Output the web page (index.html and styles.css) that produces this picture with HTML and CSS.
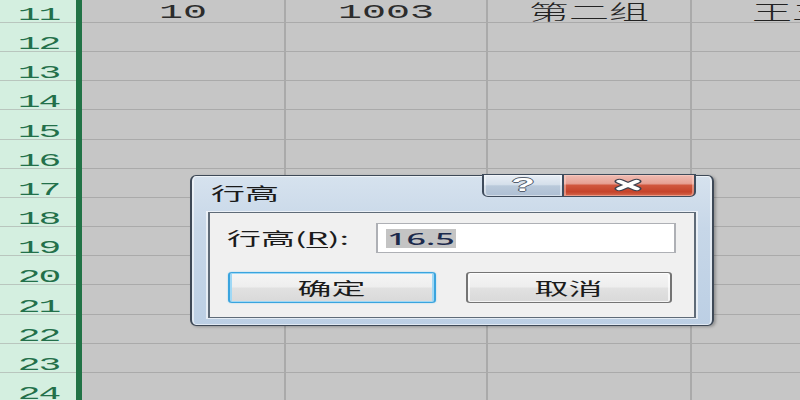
FILE: index.html
```html
<!DOCTYPE html>
<html lang="zh-CN">
<head>
<meta charset="utf-8">
<title>行高</title>
<link rel="stylesheet" href="styles.css">
</head>
<body>
<div class="stage">
  <div class="sheet">
    <div class="rowhdrs">
      <div class="rh"><span>11</span></div>
      <div class="rh"><span>12</span></div>
      <div class="rh"><span>13</span></div>
      <div class="rh"><span>14</span></div>
      <div class="rh"><span>15</span></div>
      <div class="rh"><span>16</span></div>
      <div class="rh"><span>17</span></div>
      <div class="rh"><span>18</span></div>
      <div class="rh"><span>19</span></div>
      <div class="rh"><span>20</span></div>
      <div class="rh"><span>21</span></div>
      <div class="rh"><span>22</span></div>
      <div class="rh"><span>23</span></div>
      <div class="rh"><span>24</span></div>
    </div>
    <div class="selbar"></div>
    <div class="sep"></div>
    <div class="cells">
      <div class="row"><div class="cell"><span>10</span></div><div class="cell"><span>1003</span></div><div class="cell"><span class="cjk">第二组</span></div><div class="cell"><span class="cjk">王五</span></div></div>
      <div class="row"><div class="cell"></div><div class="cell"></div><div class="cell"></div><div class="cell"></div></div>
      <div class="row"><div class="cell"></div><div class="cell"></div><div class="cell"></div><div class="cell"></div></div>
      <div class="row"><div class="cell"></div><div class="cell"></div><div class="cell"></div><div class="cell"></div></div>
      <div class="row"><div class="cell"></div><div class="cell"></div><div class="cell"></div><div class="cell"></div></div>
      <div class="row"><div class="cell"></div><div class="cell"></div><div class="cell"></div><div class="cell"></div></div>
      <div class="row"><div class="cell"></div><div class="cell"></div><div class="cell"></div><div class="cell"></div></div>
      <div class="row"><div class="cell"></div><div class="cell"></div><div class="cell"></div><div class="cell"></div></div>
      <div class="row"><div class="cell"></div><div class="cell"></div><div class="cell"></div><div class="cell"></div></div>
      <div class="row"><div class="cell"></div><div class="cell"></div><div class="cell"></div><div class="cell"></div></div>
      <div class="row"><div class="cell"></div><div class="cell"></div><div class="cell"></div><div class="cell"></div></div>
      <div class="row"><div class="cell"></div><div class="cell"></div><div class="cell"></div><div class="cell"></div></div>
      <div class="row"><div class="cell"></div><div class="cell"></div><div class="cell"></div><div class="cell"></div></div>
      <div class="row"><div class="cell"></div><div class="cell"></div><div class="cell"></div><div class="cell"></div></div>
    </div>
  </div>

  <div class="dialog">
    <div class="titlebar">
      <span class="title">行高</span>
      <div class="capbtns">
        <div class="cbtn help"><span class="q">?</span></div>
        <div class="cbtn close">
          <svg class="xicon" width="16" height="14" viewBox="0 0 16 14">
            <path d="M3.8 3.4 L12.2 10.6 M12.2 3.4 L3.8 10.6" stroke="#3b4250" stroke-width="5.2" stroke-linecap="round" fill="none"/>
            <path d="M3.8 3.4 L12.2 10.6 M12.2 3.4 L3.8 10.6" stroke="#ffffff" stroke-width="3.2" stroke-linecap="round" fill="none"/>
          </svg>
        </div>
      </div>
    </div>
    <div class="panel">
      <div class="field">
        <span class="label">行高(<u>R</u>):</span>
        <div class="input"><span class="sel">16.5</span></div>
      </div>
      <div class="actions">
        <div class="btn ok">确定</div>
        <div class="btn cancel">取消</div>
      </div>
    </div>
  </div>
</div>
</body>
</html>
```

FILE: styles.css
```css
html, body {
  margin: 0;
  padding: 0;
  overflow: hidden;
  background: #c6c6c6;
}

.stage {
  position: relative;
  width: 400px;
  height: 400px;
  overflow: hidden;
  transform: scaleX(2);
  transform-origin: 0 0;
}

.sheet {
  display: flex;
  margin-top: -6.17px;
}

.rowhdrs {
  width: 37.5px;
  flex: none;
  background: #d4efe0;
}

.rh {
  height: 29.17px;
  box-sizing: border-box;
  border-bottom: 1px solid #b9c6be;
  display: flex;
  align-items: flex-end;
  justify-content: center;
}

.rh span {
  display: block;
  font-family: "Liberation Mono", monospace;
  font-size: 19px;
  line-height: 14px;
  letter-spacing: -1px;
  color: #23704a;
  margin-right: -1px;
}

.selbar {
  width: 3px;
  flex: none;
  background: #217346;
}

.sep {
  width: 0.75px;
  flex: none;
  background: #f2f2f2;
}

.cells {
  flex: none;
  width: 420px;
  background: #c6c6c6;
}

.row {
  display: flex;
  height: 29.17px;
}

.cell {
  width: 100.5px;
  flex: none;
  box-sizing: content-box;
  border-right: 1px solid #aaaaaa;
  border-bottom: 1px solid #aaaaaa;
  height: 28.17px;
  display: flex;
  align-items: flex-end;
  justify-content: center;
  white-space: nowrap;
}

.cell span {
  display: block;
  font-family: "Liberation Mono", "Noto Sans CJK SC", monospace;
  font-size: 20px;
  line-height: 14px;
  padding-bottom: 1.8px;
  color: #2c2c2c;
}

.cell span.cjk {
  font-family: "Noto Sans CJK SC", sans-serif;
  font-weight: 300;
  font-size: 20px;
  line-height: 14px;
  padding-bottom: 3px;
  color: #222222;
}

/* ---------- dialog ---------- */

.dialog {
  position: absolute;
  left: 94.5px;
  top: 175px;
  width: 262px;
  height: 151px;
  box-sizing: border-box;
  border: 1px solid #3e4957;
  border-radius: 3px / 6px;
  background: linear-gradient(180deg, #d6e2ee 0%, #c7d7e8 35%, #bccfe4 100%);
  box-shadow: inset 0 0 0 1px rgba(255, 255, 255, 0.55), 1px 1px 2px rgba(0, 0, 0, 0.25);
  padding: 0 8px 7px 8.5px;
  display: flex;
  flex-direction: column;
  font-family: "Noto Sans CJK SC", sans-serif;
  color: #1b1b1b;
}

.titlebar {
  height: 36px;
  flex: none;
  display: flex;
  justify-content: space-between;
  align-items: flex-start;
}

.title {
  font-size: 17px;
  line-height: 20px;
  margin-top: 6.5px;
  margin-left: 1.5px;
  color: #1a1a1a;
}

.capbtns {
  display: flex;
  height: 23px;
  margin-top: -2px;
}

.cbtn {
  box-sizing: border-box;
  height: 23px;
  border: 1px solid #3f4c5c;
  display: flex;
  align-items: center;
  justify-content: center;
}

.help {
  width: 39.5px;
  border-right: none;
  border-radius: 0 0 0 3px / 0 0 0 5px;
  background: linear-gradient(180deg, #e8eef5 0%, #d5e0eb 45%, #b9c9da 52%, #aebfd3 100%);
  box-shadow: inset 0 0 0 1px rgba(255, 255, 255, 0.45);
}

.q {
  font-family: "Liberation Sans", sans-serif;
  font-weight: bold;
  font-size: 19px;
  line-height: 18px;
  color: #ffffff;
  text-shadow: 0.7px 0 0 #56606e, -0.7px 0 0 #56606e, 0 1px 0 #56606e, 0 -1px 0 #56606e;
  margin-top: -1px;
}

.close {
  width: 66.75px;
  border-radius: 0 0 3px 0 / 0 0 5px 0;
  background: linear-gradient(180deg, #efbcb3 0%, #e7a194 40%, #d0563d 50%, #c5432a 80%, #d56a50 100%);
  box-shadow: inset 0 0 0 1px rgba(255, 215, 205, 0.45);
}

.xicon {
  display: block;
  margin-top: -1px;
}

.panel {
  flex: 1;
  box-sizing: border-box;
  border: 1px solid #5f6b78;
  background: #f0f0f0;
  box-shadow: 0 0 0 1px rgba(255, 255, 255, 0.6);
  padding: 10px 9px 13px 9px;
  display: flex;
  flex-direction: column;
}

.field {
  display: flex;
  align-items: center;
  height: 30px;
}

.label {
  font-size: 17px;
  line-height: 20px;
  margin-left: -0.5px;
  color: #1b1b1b;
}

.label u {
  text-decoration-thickness: 1px;
  text-underline-offset: 2px;
}

.input {
  margin-left: auto;
  width: 150px;
  height: 30px;
  box-sizing: border-box;
  border: 1px solid #aeb0b5;
  background: #ffffff;
  display: flex;
  align-items: center;
  padding-left: 4.5px;
}

.sel {
  background: #c4c4c4;
  height: 19px;
  line-height: 19px;
  padding: 0 0.5px;
  font-family: "Noto Sans", sans-serif;
  font-size: 17px;
  font-weight: 500;
  color: #1c2a4c;
  margin-top: 0.5px;
}

.actions {
  margin-top: 19px;
  display: flex;
  justify-content: space-between;
}

.btn {
  width: 103.5px;
  height: 31px;
  box-sizing: border-box;
  border: 1px solid #747474;
  border-radius: 2px / 3px;
  background: linear-gradient(180deg, #f5f5f5 0%, #eeeeee 48%, #e1e1e1 52%, #d9d9d9 100%);
  box-shadow: inset 0 0 0 1px rgba(255, 255, 255, 0.7);
  display: flex;
  align-items: center;
  justify-content: center;
  font-size: 17px;
  line-height: 20px;
  color: #1b1b1b;
}

.ok {
  border: 1.5px solid #3aa4de;
  box-shadow: inset 0 0 0 1px #9fd8f5, 0 0 1px #7cc8ef;
}

.cancel {
  margin-right: 1.5px;
}
```
